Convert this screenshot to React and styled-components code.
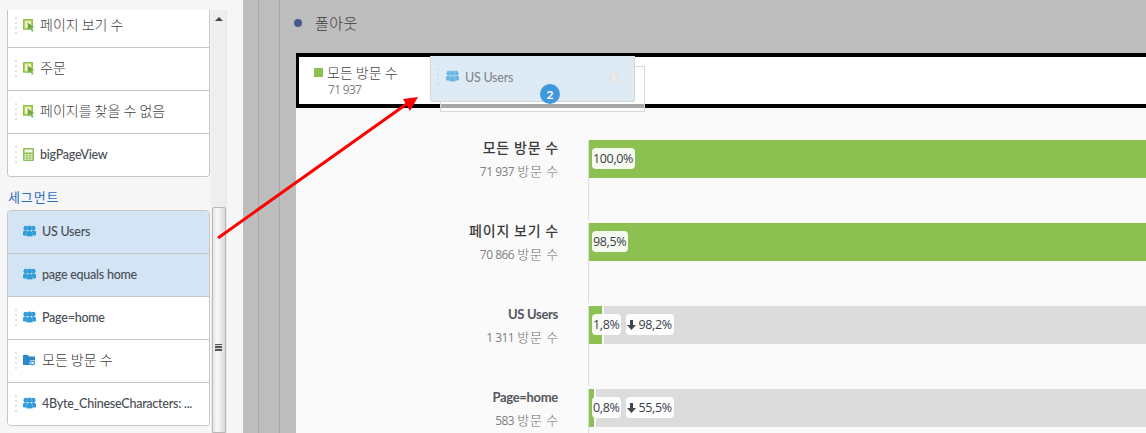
import React from 'react';
import styled, { createGlobalStyle } from 'styled-components';

const Global = createGlobalStyle`
  html, body { margin: 0; padding: 0; background: #f5f5f5; }
  * { box-sizing: border-box; }
`;
const latin = `"Lato", "Noto Sans CJK KR", sans-serif`;
const digits = `"Open Sans", "Noto Sans CJK KR", sans-serif`;
const korean = `"Noto Sans CJK KR", "Open Sans", sans-serif`;

const Page = styled.div`
  position: relative; width: 1146px; height: 433px; overflow: hidden; display: flex;
  font-family: ${latin}; color: #4b4b4b;
`;
const Sidebar = styled.aside`
  width: 243px; flex: none; background: #f6f6f6; display: flex; padding: 10px 0 0 7px;
`;
const SideColumn = styled.div`width: 203px; flex: none; margin-right: 1px; display: flex; flex-direction: column;`;
const Card = styled.div`
  background: #fff; border: 1px solid #c6c6c6; border-radius: 0 0 4px 4px;
  display: flex; flex-direction: column; justify-content: flex-end; overflow: hidden;
  height: ${p => p.$h}px; flex: none;
  ${p => p.$open && 'border-top: 0;'}
  ${p => !p.$open && 'border-radius: 4px;'}
`;
const Row = styled.div`
  height: 43px; flex: none; display: flex; align-items: center;
  background: ${p => p.$active ? '#d3e5f4' : '#fff'};
  border-bottom: 1px solid #c6c6c6;
  &:last-child { border-bottom: 0; height: 42px; }
`;
const Handle = styled.span`
  width: 2px; height: 19px; flex: none; margin: 1px 6px 0 7px;
  background: repeating-linear-gradient(to bottom, #dfe2e2 0 2px, transparent 2px 5px);
`;
const IconBox = styled.span`width: 13px; height: 13px; flex: none; display: flex; margin-top: -2px;`;
const KoLabel = styled.span`
  font-family: ${korean}; font-size: 14px; font-weight: 300; color: #404040;
  margin-left: ${p => p.$ml}px; margin-bottom: 5px; white-space: nowrap; line-height: 16px;
`;
const EnLabel = styled.span`
  font-size: 12.5px; font-weight: 500; letter-spacing: -0.25px; color: #4a4d54; margin-left: ${p => p.$ml}px;
  white-space: nowrap; line-height: 16px; margin-bottom: 0;
`;
const SectionTitle = styled.div`
  font-family: ${korean}; font-weight: 400; font-size: 13px; letter-spacing: 0.9px; color: #2c6cc4;
  height: 33px; display: flex; align-items: center; padding-top: 5px; margin-left: 1px;
`;
const Scrollbar = styled.div`
  width: 16px; height: 423px; flex: none; background: #eeeeee; border-right: 1px solid #e8e8e8;
  display: flex; flex-direction: column; align-items: center; padding-top: 7px;
`;
const ScrollArrow = styled.span`
  width: 0; height: 0; border-left: 4px solid transparent; border-right: 4px solid transparent;
  border-bottom: 4px solid #444; flex: none;
`;
const Thumb = styled.div`
  width: 14px; margin-top: 186px; flex: 1; background: linear-gradient(to right, #e4e4e4, #f8f8f8 35%, #dadada);
  border: 1px solid #b9b9b9; border-radius: 2px 2px 0 0; display: flex; align-items: flex-start; justify-content: center;
  padding-top: 136px;
`;
const Grip = styled.span`
  width: 7px; height: 7px; flex: none;
  background: repeating-linear-gradient(to bottom, #555 0 1px, #ddd 1px 2px, #555 2px 3px);
`;
const Main = styled.main`flex: 1; min-width: 0; background: #bdbdbd; padding-left: 15px; display: flex;`;
const Rail = styled.div`
  flex: 1; min-width: 0; border-left: 1px solid #a9a9a9; display: flex; padding-left: ${p => p.$pad}px;
`;
const Content = styled.div`flex: 1; min-width: 0; display: flex; flex-direction: column;`;
const Heading = styled.div`height: 53px; flex: none; display: flex; align-items: center; padding: 0 0 8px 0;`;
const Bullet = styled.span`width: 8px; height: 8px; border-radius: 50%; background: #475a8e; margin: 0 13px 0 -2px; flex: none;`;
const HeadingText = styled.span`
  font-family: ${korean}; font-weight: 300; font-size: 15px; letter-spacing: 0.5px; color: #3d3d3d;
`;
const Panel = styled.section`flex: 1; background: #fafafa; display: flex; flex-direction: column; min-height: 0;`;
const Legend = styled.div`
  height: 55px; flex: none; background: #fff; border: 4px solid #000; border-right: 0; border-left-width: 3px;
  padding: 6px 0 0 15px; display: flex; flex-direction: column;
`;
const LegendTitle = styled.div`display: flex; align-items: center; height: 18px;`;
const Swatch = styled.span`width: 9px; height: 9px; background: #8cc152; margin-right: 4px; flex: none;`;
const LegendKo = styled.span`
  font-family: ${korean}; font-weight: 300; font-size: 14px; color: #444;
`;
const LegendNum = styled.div`
  font-family: ${digits}; font-size: 12px; font-weight: 500; letter-spacing: -0.7px; color: #808080; margin: 1px 0 0 14px; line-height: 16px;
`;
const Chart = styled.div`padding-top: 32px; display: flex; flex-direction: column; gap: 3px;`;
const ChartRow = styled.div`height: 80px; flex: none; display: flex;`;
const Labels = styled.div`
  width: 262px; flex: none; text-align: right; display: flex; flex-direction: column; align-items: flex-end;
`;
const LabelKo = styled.div`
  font-family: ${korean}; font-size: 14px; font-weight: 500; letter-spacing: 0.8px; color: #3b3b3b; line-height: 16px; margin: -1px -1px 0 0;
`;
const LabelEn = styled.div`
  font-size: 13px; font-weight: 700; letter-spacing: -0.3px; color: #53565c; line-height: 16px; margin-bottom: -1px;
`;
const Sub = styled.div`margin-top: 8px; margin-right: -1px; line-height: 16px; display: flex; align-items: baseline; gap: 3px;`;
const SubNum = styled.span`font-family: ${digits}; font-size: 12px; font-weight: 500; letter-spacing: -0.5px; color: #808080;`;
const SubKo = styled.span`
  font-family: ${korean}; font-weight: 300; font-size: 13px; letter-spacing: 0.75px; color: #6f6f6f;
`;
const Plot = styled.div`
  flex: 1; margin-left: 30px; border-left: 1px solid #dcdcdc; min-width: 0;
`;
const Bar = styled.div`position: relative; height: 38px; background: #dcdcdc; display: flex;`;
const Fill = styled.div`
  height: 100%; background: #8cc152; flex: none; border-right: ${p => p.$full ? 0 : '2px solid #fafafa'};
`;
const Pills = styled.div`position: absolute; left: 3px; top: 8px; display: flex; gap: 5px;`;
const Pill = styled.span`
  height: 21px; padding: 0 2px 0 1px; border-radius: 4px; background: rgba(255,255,255,.92); display: flex; align-items: center; gap: 2px;
  font-family: ${digits}; font-size: 12.5px; font-weight: 500; letter-spacing: -0.35px; color: #3a404b; white-space: nowrap;
`;
const Ghost = styled.div`
  position: absolute; left: 430px; top: 56px; width: 205px; height: 46px; background: #deebf5;
  border: 1px solid #d1d6d9; border-top: 0; border-radius: 0 0 3px 3px; display: flex; align-items: center; padding: 0 0 2px 0;
`;
const GhostBack = styled.div`
  position: absolute; left: 440px; top: 66px; width: 205px; height: 46px;
  background: rgba(255,255,255,.65); border: 1px solid #d8d8d8;
`;
const GhostHandle = styled(Handle)`margin: 0 7px 0 6px; background: repeating-linear-gradient(to bottom, #d0dfeb 0 2px, transparent 2px 5px);`;
const GhostIcon = styled(IconBox)`opacity: .65;`;
const GhostText = styled(EnLabel)`color: #85888c; margin-left: 6px; margin-bottom: -1px;`;
const Info = styled.span`
  margin-left: auto; margin-right: 14px; width: 12px; height: 12px; border-radius: 50%; background: #e3e5e7; flex: none;
  color: #f3f4f5; font: 700 9px/12px "Liberation Serif", serif; text-align: center;
`;
const Badge = styled.span`
  position: absolute; left: 540px; top: 84px; width: 20px; height: 20px; border-radius: 50%; background: #3f97dc;
  color: #fff; font-size: 12px; font-weight: 700; display: flex; align-items: center; justify-content: center; 
`;
const ArrowLayer = styled.svg`position: absolute; left: 0; top: 0; pointer-events: none;`;

const Cursor = () => (
  <svg width="13" height="13" viewBox="0 0 13 13">
    <path d="M0.8 0.8H9.2V10H0.8Z" fill="#f0ee8a" stroke="#8cc152" strokeWidth="1.6" />
    <path d="M3 3H7V7.5H3Z" fill="#fff" />
    <path d="M4.2 3L11.5 8.3L8.6 8.8L10.4 12L9 12.8L7.3 9.6L5 11.5Z" fill="#6fa836" stroke="#b6e6e0" strokeWidth=".4" />
  </svg>
);
const Calc = () => (
  <svg width="13" height="13" viewBox="0 0 13 13">
    <rect x="0" y="0" width="11" height="13" rx="1" fill="#8cc152" />
    <rect x="1.5" y="1.5" width="8" height="3" fill="#f0f6e4" />
    {[6, 8.2, 10.4].flatMap(y => [1.5, 4.5, 7.5].map(x => <rect key={`${x}-${y}`} x={x} y={y} width="2" height="1.4" fill="#f0f6e4" />))}
  </svg>
);
const People = () => (
  <svg width="13" height="13" viewBox="0 0 13 13" fill="#2f9bd8">
    <circle cx="2.9" cy="3.2" r="2.4" /><circle cx="10.1" cy="3.2" r="2.4" />
    <path d="M0 10V7.2Q0 5.8 2 5.6H4V10.5H1Z" /><path d="M13 10V7.2Q13 5.8 11 5.6H9V10.5H12Z" />
    <circle cx="6.5" cy="3.3" r="2.7" stroke="#fff" strokeOpacity=".45" strokeWidth=".4" />
    <path d="M3.4 11.5V8Q3.4 5.9 5.5 5.9H7.5Q9.6 5.9 9.6 8V11.5Z" stroke="#fff" strokeOpacity=".45" strokeWidth=".4" />
  </svg>
);
const Folder = () => (
  <svg width="13" height="13" viewBox="0 0 13 13">
    <path d="M0 1H5L6 2.5H12V11H0Z" fill="#2f86c9" />
    <circle cx="9.5" cy="9" r="3" fill="#fff" />
    <circle cx="9.5" cy="9" r="1.9" fill="none" stroke="#2f9bd8" strokeWidth="1.2" />
  </svg>
);
const Down = () => (
  <svg width="9" height="10" viewBox="0 0 9 10"><path d="M3 0H6V5H9L4.5 10L0 5H3Z" fill="#44474d" /></svg>
);

const metrics = [
  { ko: '페이지 보기 수', icon: <Cursor /> },
  { ko: '주문', icon: <Cursor /> },
  { ko: '페이지를 찾을 수 없음', icon: <Cursor /> },
  { en: 'bigPageView', icon: <Calc /> },
];
const segments = [
  { en: 'US Users', icon: <People />, active: true },
  { en: 'page equals home', icon: <People />, active: true },
  { en: 'Page=home', icon: <People /> },
  { ko: '모든 방문 수', icon: <Folder /> },
  { en: '4Byte_ChineseCharacters: ...', icon: <People /> },
];
const rows = [
  { ko: '모든 방문 수', num: '71 937', fill: null, pills: ['100,0%'] },
  { ko: '페이지 보기 수', num: '70 866', fill: null, pills: ['98,5%'] },
  { en: 'US Users', num: '1 311', fill: 15, pills: ['1,8%', '98,2%'] },
  { en: 'Page=home', num: '583', fill: 7, pills: ['0,8%', '55,5%'] },
];

const SideRow = ({ item, ml }) => (
  <Row $active={item.active}>
    <Handle />
    <IconBox>{item.icon}</IconBox>
    {item.ko ? <KoLabel $ml={ml}>{item.ko}</KoLabel> : <EnLabel $ml={ml}>{item.en}</EnLabel>}
  </Row>
);

export default function App() {
  return (
    <Page>
      <Global />
      <Sidebar>
        <SideColumn>
          <Card $h={167} $open>
            {metrics.map((m, i) => <SideRow key={i} item={m} ml={4} />)}
          </Card>
          <SectionTitle>세그먼트</SectionTitle>
          <Card $h={216}>
            {segments.map((s, i) => <SideRow key={i} item={s} ml={6} />)}
          </Card>
        </SideColumn>
        <Scrollbar>
          <ScrollArrow />
          <Thumb><Grip /></Thumb>
        </Scrollbar>
      </Sidebar>
      <Main>
        <Rail $pad={20}>
          <Rail $pad={16}>
            <Content>
              <Heading>
                <Bullet />
                <HeadingText>폴아웃</HeadingText>
              </Heading>
              <Panel>
                <Legend>
                  <LegendTitle><Swatch /><LegendKo>모든 방문 수</LegendKo></LegendTitle>
                  <LegendNum>71 937</LegendNum>
                </Legend>
                <Chart>
                  {rows.map((r, i) => (
                    <ChartRow key={i}>
                      <Labels>
                        {r.ko ? <LabelKo>{r.ko}</LabelKo> : <LabelEn>{r.en}</LabelEn>}
                        <Sub><SubNum>{r.num}</SubNum><SubKo>방문 수</SubKo></Sub>
                      </Labels>
                      <Plot>
                        <Bar>
                          <Fill $full={!r.fill} style={{ width: r.fill ? r.fill : '100%' }} />
                          <Pills>
                            {r.pills.map((p, j) => <Pill key={j}>{j === 1 && <Down />}{p}</Pill>)}
                          </Pills>
                        </Bar>
                      </Plot>
                    </ChartRow>
                  ))}
                </Chart>
              </Panel>
            </Content>
          </Rail>
        </Rail>
      </Main>
      <GhostBack />
      <Ghost>
        <GhostHandle />
        <GhostIcon><People /></GhostIcon>
        <GhostText>US Users</GhostText>
        <Info>i</Info>
      </Ghost>
      <Badge>2</Badge>
      <ArrowLayer width="1146" height="433" viewBox="0 0 1146 433">
        <path d="M218 238L408 103" stroke="#f00" strokeWidth="3" fill="none" />
        <path d="M418 97L403 99L410 111Z" fill="#f00" />
      </ArrowLayer>
    </Page>
  );
}
